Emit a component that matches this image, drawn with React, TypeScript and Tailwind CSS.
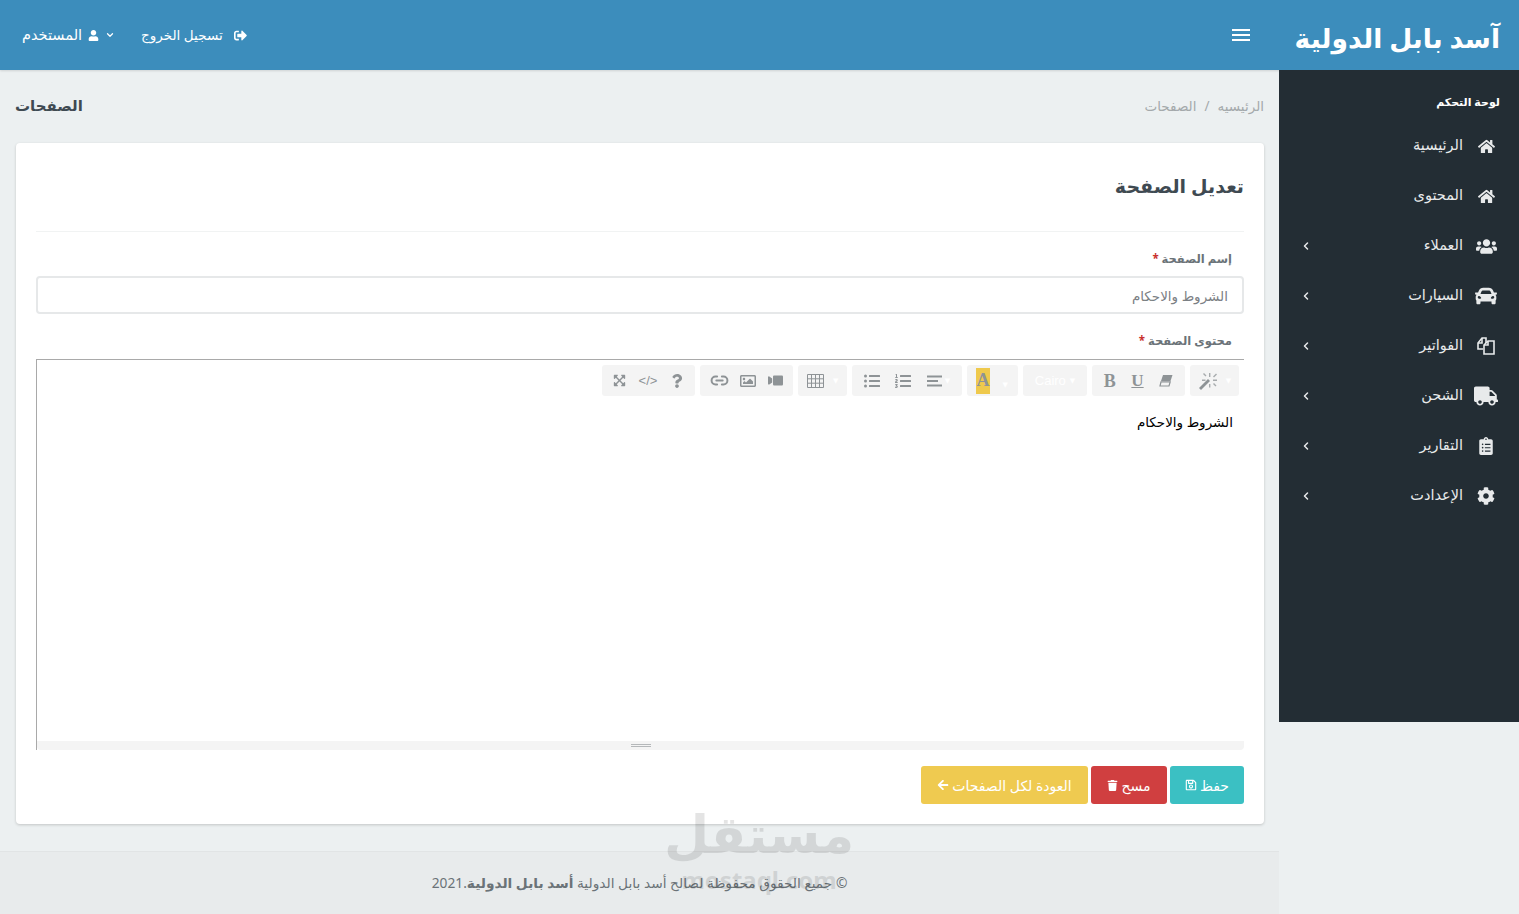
import React from "react";
import {
  FaHome, FaUsers, FaCar, FaTruck, FaClipboardList, FaCog, FaUser, FaSignOutAlt,
  FaRegSave, FaTrash, FaArrowLeft, FaListOl, FaListUl,
  FaVideo, FaRegImage, FaQuestion, FaExpandArrowsAlt,
} from "react-icons/fa";
import { ChevronLeft, ChevronDown, Link2 } from "lucide-react";

const Files = () => (
  <svg width="20" height="20" viewBox="0 0 20 20" fill="none" stroke="currentColor" strokeWidth="1.6">
    <path d="M7 13H2V7l4-5h4v5" />
    <path d="M6 2v5H2" />
    <path d="M8 9l4-4h6v13H8z" />
    <path d="M12 5v4H8" />
  </svg>
);

const Wand = () => (
  <svg width="20" height="20" viewBox="0 0 20 20" fill="currentColor">
    <path d="M1 17l9-9 2 2-9 9z" />
    <path d="M11 2h1.4v4H11zM11 13h1.4v3.5H11zM15 8.6h4V10h-4zM4 8.6h3.5V10H4zM5 3l1-1 2.5 2.5-1 1zM15 13l1-1 2.5 2.5-1 1zM15 5.5l3-3 1 1-3 3z" opacity="0.75" />
  </svg>
);

const Eraser = () => (
  <svg width="14" height="13" viewBox="0 0 14 13" fill="currentColor">
    <path d="M4 1h9.5l-2 6H2z" />
    <path d="M2 7.8h9.2L10 12H1z" fill="none" stroke="currentColor" strokeWidth="1.2" />
  </svg>
);

const Align = () => (
  <svg width="15" height="12" viewBox="0 0 15 12" fill="currentColor">
    <rect y="0.5" width="15" height="2" />
    <rect y="5" width="11" height="2" />
    <rect y="9.5" width="15" height="2" />
  </svg>
);

const Grid = () => (
  <svg width="17" height="14" viewBox="0 0 17 14" fill="none" stroke="currentColor" strokeWidth="1">
    <path d="M.5.5h16v13H.5zM.5 4.8h16M.5 9.2h16M4.5.5v13M8.5.5v13M12.5.5v13" />
  </svg>
);

const items: { label: string; icon: React.ReactNode; arrow: boolean }[] = [
  { label: "الرئيسية", icon: <FaHome size={17} />, arrow: false },
  { label: "المحتوى", icon: <FaHome size={17} />, arrow: false },
  { label: "العملاء", icon: <FaUsers size={21} />, arrow: true },
  { label: "السيارات", icon: <FaCar size={22} />, arrow: true },
  { label: "الفواتير", icon: <Files />, arrow: true },
  { label: "الشحن", icon: <FaTruck size={24} />, arrow: true },
  { label: "التقارير", icon: <FaClipboardList size={18} />, arrow: true },
  { label: "الإعدادت", icon: <FaCog size={18} />, arrow: true },
];

const Group = ({ w, children }: { w: string; children: React.ReactNode }) => (
  <div dir="ltr" className={`flex h-[31px] ${w} items-center justify-around rounded-[3px] bg-[#f4f4f4] px-1 text-[#8e9396]`}>
    {children}
  </div>
);

const Caret = () => <span className="text-[7px] leading-none text-white">▼</span>;

export default function App() {
  return (
    <div
      dir="rtl"
      className="relative h-[914px] w-[1519px] overflow-hidden bg-[#ecf0f1] font-['Noto_Sans','DejaVu_Sans',sans-serif] text-[#4c5667]"
    >
      <header className="flex h-[70px] items-center bg-[#3c8dbc] text-white shadow-[0_1px_2px_rgba(0,0,0,0.12)]">
        <div className="w-[240px] shrink-0 pr-[19px] pt-[8px] text-[26.5px] font-semibold">آسد بابل الدولية</div>
        <div className="flex flex-1 items-center justify-between pl-[22px] pr-[29px]">
          <svg width="18" height="12" viewBox="0 0 18 12" fill="white">
            <rect y="0" width="18" height="2" />
            <rect y="5" width="18" height="2" />
            <rect y="10" width="18" height="2" />
          </svg>
          <div className="flex items-center gap-[26px]">
            <div className="flex items-center gap-[11px] text-[13.5px]">
              <FaSignOutAlt size={13} />
              <span>تسجيل الخروج</span>
            </div>
            <div className="flex items-center gap-[6px] text-[14.5px]">
              <ChevronDown size={10} strokeWidth={3} />
              <FaUser size={11} />
              <span>المستخدم</span>
            </div>
          </div>
        </div>
      </header>

      <div className="flex items-start">
        <aside className="h-[652px] w-[240px] shrink-0 bg-[#232d34] text-[#e8eaeb]">
          <div className="pr-[19px] pt-[24px] text-[11px] font-bold leading-[16px] text-white">لوحة التحكم</div>
          <nav className="mt-[11px]">
            {items.map((it) => (
              <div key={it.label} className="flex h-[50px] items-center pl-[14px] pr-[21px] text-[14.5px]">
                <span className="flex w-[24px] justify-center">{it.icon}</span>
                <span className="mb-[2px] mr-[11px] flex-1">{it.label}</span>
                {it.arrow && <ChevronLeft size={12} strokeWidth={3} className="ml-[7px]" />}
              </div>
            ))}
          </nav>
        </aside>

        <main className="flex h-[844px] flex-1 flex-col">
          <div className="flex h-[73px] shrink-0 items-center justify-between px-[15px]">
            <div className="flex items-center gap-[8px] text-[13.5px] text-[#a4a9ab]">
              <span>الرئيسيه</span>
              <span>/</span>
              <span>الصفحات</span>
            </div>
            <h1 className="mb-[2px] text-[15px] font-semibold text-[#3f4a52]">الصفحات</h1>
          </div>

          <section className="ml-[16px] mr-[15px] h-[681px] shrink-0 rounded-[4px] bg-white px-[20px] shadow-[0_1px_3px_rgba(0,0,0,0.18)]">
            <div className="flex h-[89px] items-center border-b border-[#f1f3f3]">
              <h2 className="mb-[2px] text-[19px] font-semibold text-[#3f4a52]">تعديل الصفحة</h2>
            </div>
            <label className="mt-[18px] block pr-[12px] text-[11.5px] font-bold leading-[18px] text-[#6b7378]">
              إسم الصفحة <span className="text-[#c9302c]">*</span>
            </label>
            <div className="mt-[8px] flex h-[38px] items-center rounded-[4px] border-2 border-[#e6e8e9] pr-[14px] pt-[3px] text-[13.5px] text-[#7b8084]">
              الشروط والاحكام
            </div>
            <label className="mt-[18px] block pr-[12px] text-[11.5px] font-bold leading-[18px] text-[#6b7378]">
              محتوى الصفحة <span className="text-[#c9302c]">*</span>
            </label>
            <div className="mt-[9px] flex h-[391px] flex-col border-l border-t border-[#a9a9a9]">
              <div className="flex gap-[5px] pr-[5px] pt-[5px]">
                <Group w="w-[49px]">
                  <Wand />
                  <Caret />
                </Group>
                <Group w="w-[93px]">
                  <span className="font-['Liberation_Serif',serif] text-[18px] font-bold leading-none">B</span>
                  <span className="font-['Liberation_Serif',serif] text-[17px] font-bold leading-none underline">U</span>
                  <Eraser />
                </Group>
                <div dir="ltr" className="flex h-[31px] w-[64px] items-center justify-center gap-[4px] rounded-[3px] bg-[#f4f4f4] text-[13px] text-white">
                  <span className="font-['Liberation_Sans',sans-serif]">Cairo</span>
                  <Caret />
                </div>
                <div dir="ltr" className="flex h-[31px] w-[51px] items-center rounded-[3px] bg-[#f4f4f4] pl-[9px] pr-[10px]">
                  <span className="flex h-[26px] w-[14px] items-center justify-center bg-[#efc94c] font-['Liberation_Serif',serif] text-[18px] font-bold text-[#8e9396]">A</span>
                  <span className="ml-auto"><Caret /></span>
                </div>
                <Group w="w-[110px]">
                  <FaListUl size={16} />
                  <FaListOl size={16} />
                  <span className="flex items-center gap-[3px]">
                    <Align />
                    <Caret />
                  </span>
                </Group>
                <Group w="w-[49px]">
                  <Grid />
                  <Caret />
                </Group>
                <Group w="w-[93px]">
                  <Link2 size={19} strokeWidth={2.5} />
                  <FaRegImage size={16} />
                  <FaVideo size={15} className="-scale-x-100" />
                </Group>
                <Group w="w-[93px]">
                  <FaExpandArrowsAlt size={13} />
                  <span className="font-['Liberation_Sans',sans-serif] text-[13px] leading-none">&lt;/&gt;</span>
                  <FaQuestion size={14} />
                </Group>
              </div>
              <div className="flex-1 pr-[11px] pt-[15px] text-[13.5px] leading-[22px] text-black">الشروط والاحكام</div>
              <div className="flex h-[9px] items-center justify-center rounded-b-[4px] bg-[#f4f4f4]">
                <div className="h-[3px] w-[20px] border-y border-[#b5b8ba]" />
              </div>
            </div>
            <div className="mt-[16px] flex gap-[3px] text-[14px] text-white">
              <button className="flex h-[38px] w-[74px] items-center justify-center gap-[3px] rounded-[3px] bg-[#3bc0c3]">
                حفظ <FaRegSave size={12} />
              </button>
              <button className="flex h-[38px] w-[76px] items-center justify-center gap-[3px] rounded-[3px] bg-[#d03f40]">
                مسح <FaTrash size={11} />
              </button>
              <button className="flex h-[38px] w-[167px] items-center justify-center gap-[3px] rounded-[3px] bg-[#efca50]">
                العودة لكل الصفحات <FaArrowLeft size={12} />
              </button>
            </div>
          </section>

          <footer className="mt-[27px] flex h-[63px] shrink-0 items-center justify-center border-t border-[#e1e4e5] bg-[#e8ebec] text-[13.75px] text-[#6b7378]">
            <span>
              © جميع الحقوق محفوظة لصالح أسد بابل الدولية <b>أسد بابل الدولية</b>.2021
            </span>
          </footer>
        </main>
      </div>

      <div className="pointer-events-none absolute left-[654px] top-[798px] w-[210px] text-center font-bold leading-none text-black opacity-[0.1]">
        <div className="text-[52px] leading-[70px]">مستقل</div>
        <div className="text-[24px]">mostaql.com</div>
      </div>
    </div>
  );
}
